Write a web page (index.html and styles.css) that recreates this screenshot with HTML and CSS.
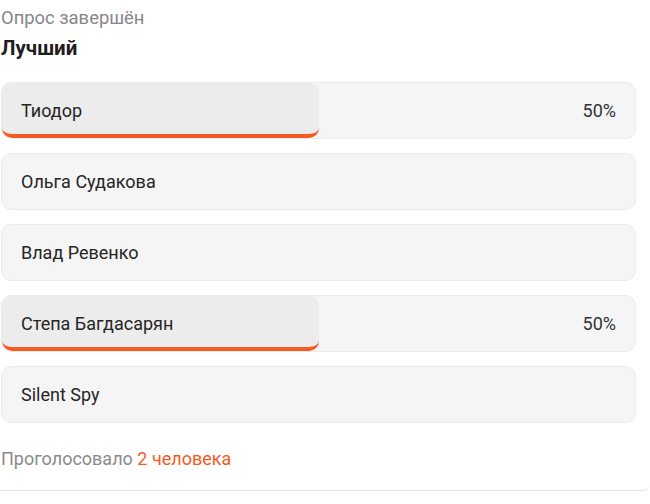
FILE: index.html
```html
<!DOCTYPE html>
<html>

<head>
    <meta charset="UTF-8">
    <title>Опрос</title>
    <link rel="stylesheet" href="styles.css">
</head>

<body>
    <div class="poll">
        <div class="poll-status">Опрос завершён</div>
        <div class="poll-title">Лучший</div>

        <div class="poll-options">
            <div class="option">
                <div class="option-fill" style="width: 50%"></div>
                <span class="option-name">Тиодор</span>
                <span class="option-percent">50%</span>
            </div>
            <div class="option">
                <span class="option-name">Ольга Судакова</span>
            </div>
            <div class="option">
                <span class="option-name">Влад Ревенко</span>
            </div>
            <div class="option">
                <div class="option-fill" style="width: 50%"></div>
                <span class="option-name">Степа Багдасарян</span>
                <span class="option-percent">50%</span>
            </div>
            <div class="option">
                <span class="option-name">Silent Spy</span>
            </div>
        </div>

        <div class="poll-footer">Проголосовало <span class="accent">2 человека</span></div>
    </div>
</body>

</html>
```

FILE: styles.css
```css
html,
body {
    margin: 0;
    background: #fff;
}

body {
    font-family: Roboto, "Noto Sans", sans-serif;
    color: #222;
}

.poll {
    width: 648px;
    padding: 6px 0 19px 1px;
    border-bottom: 1px solid #e4e4e4;
    border-radius: 0 0 6px 0;
}

.poll-status {
    font-size: 18.4px;
    line-height: 24px;
    color: #878787;
}

.poll-title {
    margin-top: 6px;
    font-size: 20.5px;
    line-height: 24px;
    font-weight: 700;
    color: #1e1e1e;
}

/* варианты ответа */
.poll-options {
    margin-top: 22px;
    width: 635px;
    display: flex;
    flex-direction: column;
    gap: 14px;
}

.option {
    position: relative;
    box-sizing: border-box;
    height: 57px;
    display: flex;
    align-items: center;
    justify-content: space-between;
    padding: 0 19px 0 19px;
    background: #f5f5f5;
    border: 1px solid #ebebeb;
    border-radius: 10px;
    overflow: hidden;
    font-size: 18px;
}

.option-fill {
    position: absolute;
    left: 0;
    top: 0;
    bottom: 0;
    box-sizing: border-box;
    background: #ececec;
    border-bottom: 4px solid #f45a22;
    border-radius: 10px;
}

.option-name,
.option-percent {
    position: relative;
    color: #252525;
}

.option-percent {
    color: #333;
}

.poll-footer {
    margin-top: 24px;
    font-size: 18px;
    line-height: 24px;
    color: #8a8a8a;
}

.accent {
    color: #f45a22;
}
```
